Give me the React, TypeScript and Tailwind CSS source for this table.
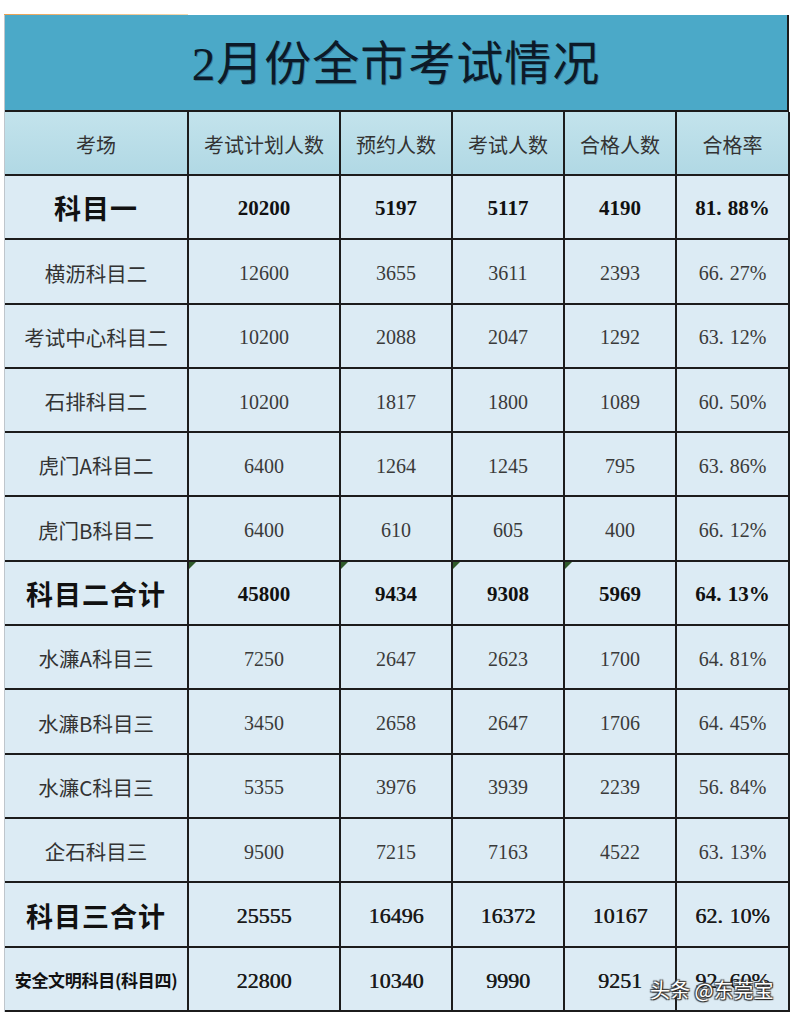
import React from "react";

type Row = {
  label: string;
  vals: string[];
  kind: "normal" | "bold" | "sum3" | "safe";
  tri?: boolean;
};

const rows: Row[] = [
  { label: "科目一", vals: ["20200", "5197", "5117", "4190", "81.88%"], kind: "bold" },
  { label: "横沥科目二", vals: ["12600", "3655", "3611", "2393", "66.27%"], kind: "normal" },
  { label: "考试中心科目二", vals: ["10200", "2088", "2047", "1292", "63.12%"], kind: "normal" },
  { label: "石排科目二", vals: ["10200", "1817", "1800", "1089", "60.50%"], kind: "normal" },
  { label: "虎门A科目二", vals: ["6400", "1264", "1245", "795", "63.86%"], kind: "normal" },
  { label: "虎门B科目二", vals: ["6400", "610", "605", "400", "66.12%"], kind: "normal" },
  { label: "科目二合计", vals: ["45800", "9434", "9308", "5969", "64.13%"], kind: "bold", tri: true },
  { label: "水濂A科目三", vals: ["7250", "2647", "2623", "1700", "64.81%"], kind: "normal" },
  { label: "水濂B科目三", vals: ["3450", "2658", "2647", "1706", "64.45%"], kind: "normal" },
  { label: "水濂C科目三", vals: ["5355", "3976", "3939", "2239", "56.84%"], kind: "normal" },
  { label: "企石科目三", vals: ["9500", "7215", "7163", "4522", "63.13%"], kind: "normal" },
  { label: "科目三合计", vals: ["25555", "16496", "16372", "10167", "62.10%"], kind: "sum3" },
  { label: "安全文明科目(科目四)", vals: ["22800", "10340", "9990", "9251", "92.60%"], kind: "safe" },
];

const headers = ["考场", "考试计划人数", "预约人数", "考试人数", "合格人数", "合格率"];

const cjk = { fontFamily: '"Noto Sans CJK SC", "Noto Sans", sans-serif' };
const num = { fontFamily: '"Liberation Serif", "Noto Sans CJK SC", serif' };

function Pct({ v }: { v: string }) {
  const [a, b] = v.split(".");
  return (
    <span>
      {a}
      <span className="inline-block w-[0.55em]">.</span>
      {b}
    </span>
  );
}

export default function App() {
  return (
    <div className="w-[792px] h-[1019px] bg-white overflow-hidden relative">
      <div className="pt-[14px] pl-[4px]">
        <div className="w-[184px] h-[1px] bg-gradient-to-r from-[#e8a050] to-[#f4d9b0]" />
        <div className="w-[785px] border-l border-[#bfc6cc]">
          {/* Title */}
          <div className="h-[97px] bg-[#4ba9c8] border-r-2 border-b-2 border-[#1c1c1c] flex items-center justify-center">
            <span
              className="text-[47px] leading-none text-[#0c1a28] tracking-[1px] pt-[4px]"
              style={{ fontFamily: '"Liberation Serif", "Noto Sans CJK SC", serif', textShadow: "1px 1px 0 rgba(0,0,0,0.25)" }}
            >
              2月份全市考试情况
            </span>
          </div>
          {/* Header */}
          <div className="grid grid-cols-[184px_152px_112px_112px_112px_113px] h-[64px] bg-gradient-to-b from-[#c3e3ec] to-[#b0d8e4]">
            {headers.map((h) => (
              <div
                key={h}
                className="border-r-2 border-b-2 border-[#1c1c1c] flex items-center justify-center text-[20px] text-[#333] pt-[3px]"
                style={cjk}
              >
                {h}
              </div>
            ))}
          </div>
          {/* Body */}
          {rows.map((r) => (
            <div
              key={r.label}
              className="grid grid-cols-[184px_152px_112px_112px_112px_113px] h-[64.3px] bg-[#dcebf4]"
            >
              <div
                className={
                  "border-r-2 border-b-2 border-[#1c1c1c] flex items-center justify-center whitespace-nowrap pt-[3px] " +
                  (r.kind === "bold" || r.kind === "sum3"
                    ? "text-[27px] font-bold text-[#111] tracking-[1px]"
                    : r.kind === "safe"
                    ? "text-[17px] font-bold text-[#111] tracking-[-0.3px]"
                    : "text-[20.5px] text-[#333]")
                }
                style={cjk}
              >
                {r.label}
              </div>
              {r.vals.map((v, i) => (
                <div
                  key={i}
                  className={
                    "relative border-r-2 border-b-2 border-[#1c1c1c] flex items-center justify-center pt-[3px] " +
                    (r.kind === "bold"
                      ? "text-[21px] font-bold text-[#111]"
                      : r.kind === "sum3" || r.kind === "safe"
                      ? "text-[22px] text-[#1a1a1a] [text-shadow:0.4px_0_0_#1a1a1a]"
                      : "text-[20px] text-[#3a3a3a]")
                  }
                  style={num}
                >
                  {r.tri && i < 4 && (
                    <span className="absolute left-0 top-0 w-0 h-0 border-t-[7px] border-r-[7px] border-t-[#2f5a2a] border-r-transparent" />
                  )}
                  {v.includes("%") ? <Pct v={v} /> : v}
                </div>
              ))}
            </div>
          ))}
        </div>
      </div>
      {/* Watermark */}
      <div
        className="absolute left-[650px] top-[980px] text-[20px] text-white leading-none"
        style={{
          fontFamily: '"Noto Sans CJK SC", sans-serif',
          textShadow: "1px 1px 1px #222, -1px -1px 1px #444, 1px -1px 1px #444, -1px 1px 1px #444",
        }}
      >
        头条 @东莞宝
      </div>
    </div>
  );
}
